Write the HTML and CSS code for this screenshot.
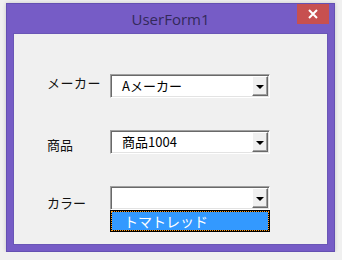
FILE: index.html
```html
<!DOCTYPE html>
<html lang="ja">
<head>
<meta charset="UTF-8" />
<meta name="viewport" content="width=device-width, initial-scale=1.0"/>
<title>UserForm1</title>
<link rel="stylesheet" href="styles.css">
</head>
<body>

<div class="window">
  <div class="titlebar">
    <span></span>
    <div class="title">UserForm1</div>
    <button class="close-btn" aria-label="閉じる">
      <svg width="10" height="10" viewBox="0 0 10 10">
        <path d="M1 1 L9 9 M9 1 L1 9" stroke="#fff" stroke-width="2" fill="none"/>
      </svg>
    </button>
  </div>

  <div class="client">
    <div class="field">
      <label class="label label-maker">メーカー</label>
      <div class="combo">
        <span class="combo-text">Aメーカー</span>
        <span class="combo-btn"><span class="arrow"></span></span>
      </div>
    </div>

    <div class="field">
      <label class="label label-item">商品</label>
      <div class="combo">
        <span class="combo-text">商品1004</span>
        <span class="combo-btn"><span class="arrow"></span></span>
      </div>
    </div>

    <div class="field">
      <label class="label label-color">カラー</label>
      <div>
        <div class="combo">
          <span class="combo-text"></span>
          <span class="combo-btn"><span class="arrow"></span></span>
        </div>
        <!-- 開いたドロップダウン -->
        <div class="combo-list">
          <div class="combo-item">トマトレッド</div>
        </div>
      </div>
    </div>
  </div>
</div>

</body>
</html>
```

FILE: styles.css
```css
body {
  margin: 0;
  padding: 0;
  background: #f0f0f0;
  font-family: "Noto Sans CJK JP", "Noto Sans", sans-serif;
}

/* ウィンドウ枠 */
.window {
  margin: 3px 0 0 6px;
  width: 329px;
  height: 249px;
  box-sizing: border-box;
  border: 1px solid #6450b2;
  background: #765cc6;
  padding: 0 6px 6px 6px;
  box-shadow: 0 0 4px rgba(0,0,0,0.18);
}

/* タイトルバー */
.titlebar {
  height: 29px;
  display: grid;
  grid-template-columns: 1fr auto 1fr;
  margin: 0 -6px;
}

.title {
  font-family: "Open Sans", "Noto Sans", sans-serif;
  font-size: 15px;
  line-height: 31px;
  color: #33295a;
}

.close-btn {
  justify-self: end;
  align-self: start;
  margin: 0 5px 0 0;
  width: 32px;
  height: 20px;
  padding: 0;
  border: none;
  background: #c75050;
  display: flex;
  align-items: center;
  justify-content: center;
}

/* フォーム本体 */
.client {
  height: 212px;
  box-sizing: border-box;
  background: #f0f0f0;
  border: 1px solid #6a56b6;
  padding: 40px 0 0 33px;
  display: flex;
  flex-direction: column;
  gap: 32px;
}

.field {
  display: grid;
  grid-template-columns: 63px 160px;
  align-items: start;
}

.label {
  font-size: 13px;
  line-height: 16px;
  color: #111;
}

.label-maker { margin-top: 1px; letter-spacing: 0.5px; }
.label-item { margin-top: 7px; }
.label-color { margin-top: 9px; }

/* コンボボックス */
.combo {
  width: 160px;
  height: 24px;
  box-sizing: border-box;
  display: flex;
  background: #fff;
  border-top: 1px solid #a0a0a0;
  border-left: 1px solid #a0a0a0;
  border-right: 1px solid #fff;
  border-bottom: 1px solid #fff;
  box-shadow: inset 1px 1px 0 #696969, inset -1px -1px 0 #e3e3e3;
  padding: 1px;
}

.combo-text {
  flex: 1;
  padding-left: 10px;
  font-size: 13px;
  line-height: 20px;
  color: #000;
}

.combo-btn {
  width: 16px;
  height: 20px;
  box-sizing: border-box;
  background: #f0f0f0;
  border-top: 1px solid #fff;
  border-left: 1px solid #fff;
  border-right: 1px solid #696969;
  border-bottom: 1px solid #696969;
  box-shadow: inset -1px -1px 0 #a0a0a0;
  display: flex;
  align-items: center;
  justify-content: center;
}

.arrow {
  width: 0;
  height: 0;
  border-left: 4px solid transparent;
  border-right: 4px solid transparent;
  border-top: 4px solid #000;
  margin: 1px 1px 0 0;
}

/* ドロップダウンリスト */
.combo-list {
  width: 160px;
  height: 22px;
  box-sizing: border-box;
  border: 1px solid #000;
  background: #000;
}

.combo-item {
  height: 20px;
  box-sizing: border-box;
  border: 1px dotted #ff9a1a;
  background: #3399ff;
  background-clip: padding-box;
  color: #fff;
  font-size: 14px;
  line-height: 18px;
  padding-left: 12px;
}
```
